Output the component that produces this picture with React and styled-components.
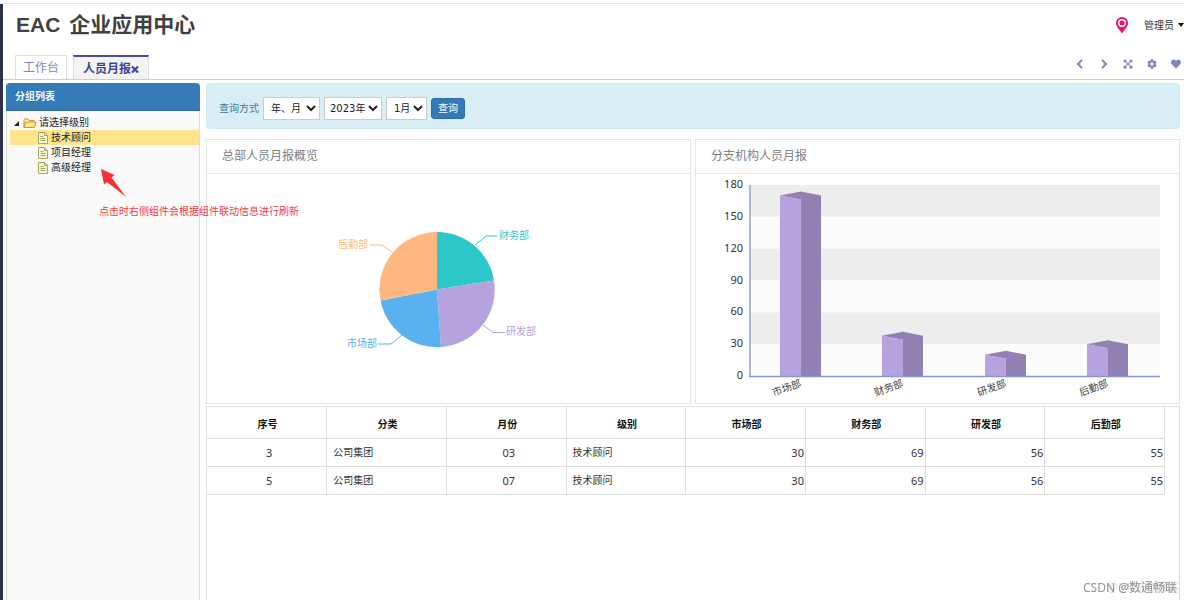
import React, { useState } from 'react';
import styled, { createGlobalStyle, css } from 'styled-components';
import { FaExpandArrowsAlt, FaCog, FaHeart } from 'react-icons/fa';

const GlobalStyle = createGlobalStyle`
  *, *::before, *::after { box-sizing: border-box; }
  body {
    margin: 0;
    background: #fff;
    color: #333;
    font: 10px/15px "DejaVu Sans", "Noto Sans CJK SC", sans-serif;
  }
  button, select { font: inherit; color: inherit; }
  button { cursor: pointer; }
`;

const chartFont = css`
  font-family: "Noto Sans", "Noto Sans CJK SC", sans-serif;
`;

const Page = styled.div`
  display: flex;
  flex-direction: column;
  min-height: 100vh;
  border-top: 2px solid #fff;
`;

const Shell = styled.div`
  flex: 1;
  display: flex;
  flex-direction: column;
  border-left: 3px solid #2b3148;
  box-shadow: 0 -1px 0 #e4e4e4;
  margin-top: 2px;
`;

const Header = styled.header`
  display: flex;
  justify-content: space-between;
  align-items: center;
  height: 42px;
  padding-left: 13px;
`;

const Title = styled.h1`
  display: flex;
  gap: 9px;
  margin: 0;
  color: #404040;
  font: bold 21px/28px "Liberation Sans", "Noto Sans CJK SC", sans-serif;
`;

const Account = styled.div`
  display: flex;
  align-items: center;
  gap: 16px;
`;

const UserButton = styled.button`
  display: flex;
  align-items: center;
  gap: 4px;
  padding: 0;
  border: 0;
  background: none;
  color: #333;
`;

const NavBar = styled.div`
  display: flex;
  justify-content: space-between;
  height: 34px;
  padding-left: 12px;
  border-bottom: 1px solid #ccc;
`;

const Tabs = styled.nav`
  display: flex;
  align-items: flex-end;
  gap: 6px;
`;

const Tab = styled.button`
  display: flex;
  align-items: center;
  height: 24px;
  padding: 2px 7px 0;
  border: 1px solid #ddd;
  border-bottom: 0;
  background: #fff;
  color: #8388b8;
  font-size: 12px;
  ${({ $active }) => $active && css`
    padding: 2px 9px 0;
    border-top: 2px solid #4a4f9c;
    background: #f3f3f3;
    color: #40469a;
    font-weight: 700;
  `}
`;

const Tools = styled.div`
  display: flex;
  align-items: center;
  gap: 12px;
  padding: 2px 2px 0 0;
`;

const Tool = styled.button`
  display: flex;
  justify-content: center;
  width: 12px;
  padding: 0;
  border: 0;
  background: none;
  color: #7d86bd;
`;

const Body = styled.div`
  flex: 1;
  display: grid;
  grid-template-columns: 194px 1fr;
  gap: 6px;
  padding: 3px 4px 0 3px;
`;

const Sidebar = styled.aside`
  position: relative;
  border: 1px solid #ddd;
  border-width: 0 1px;
  border-radius: 4px 4px 0 0;
  background: #f9f9f9;
`;

const SideTitle = styled.h2`
  margin: 0 -1px;
  padding: 0 9px;
  border-bottom: 1px solid #2b6599;
  border-radius: 4px 4px 0 0;
  background: #337ab7;
  color: #fff;
  font-size: 10px;
  line-height: 27px;
`;

const Tree = styled.ul`
  margin: 0;
  padding: 4px 0 0 3px;
  list-style: none;
`;

const TreeRow = styled.button`
  display: flex;
  align-items: center;
  gap: ${({ $leaf }) => ($leaf ? 3 : 2)}px;
  width: 100%;
  height: 15px;
  padding: 0 0 0 ${({ $leaf }) => ($leaf ? 28 : 3)}px;
  border: 0;
  background: ${({ $selected }) => ($selected ? '#ffe48d' : 'transparent')};
  color: #222;
`;

const Note = styled.div`
  position: absolute;
  z-index: 2;
  top: 86px;
  left: 92px;
  color: #f23a3f;
  white-space: nowrap;
`;

const NoteArrow = styled.svg`
  display: block;
  margin: 0 0 6px 2px;
`;

const Main = styled.main`
  display: flex;
  flex-direction: column;
  min-width: 0;
`;

const QueryBar = styled.form`
  display: flex;
  align-items: center;
  gap: 4px;
  height: 46px;
  margin-bottom: 10px;
  padding: 4px 12px 0;
  border: 1px solid #cde8f0;
  border-radius: 4px;
  background: #d9edf5;
  color: #3f7794;
`;

const Select = styled.select`
  width: ${({ $width }) => $width}px;
  height: 23px;
  padding: 0 0 0 ${({ $tight }) => ($tight ? 1 : 3)}px;
  border: 1px solid #ccc;
  border-radius: 0;
  background: #fff;
  color: #222;
`;

const QueryButton = styled.button`
  height: 21px;
  padding: 0 6px;
  border: 1px solid #2e6da4;
  border-radius: 3px;
  background: #337ab7;
  color: #fff;
`;

const Cards = styled.div`
  display: grid;
  grid-template-columns: 1fr 1fr;
  gap: 4px;
  margin-bottom: 2px;
`;

const Card = styled.section`
  border: 1px solid #e4e4e4;
`;

const CardTitle = styled.h3`
  margin: 0;
  padding: 0 15px;
  border-bottom: 1px solid #e9e9e9;
  color: #808080;
  font-size: 12px;
  font-weight: 400;
  line-height: 33px;
`;

const Chart = styled.svg`
  display: block;
  width: 100%;
  height: 229px;
  font-size: 10px;
  ${chartFont}
`;

const Report = styled.section`
  flex: 1;
  padding-right: 14px;
  border: 1px solid #ddd;
  border-bottom: 0;
`;

const Table = styled.table`
  width: 100%;
  border-collapse: collapse;
  table-layout: fixed;
  ${chartFont}
`;

const Cell = styled.td`
  height: 28px;
  padding: 0 1px 0 6px;
  border-right: 1px solid #ddd;
  border-bottom: 1px solid #ddd;
  color: #333;
  font-size: ${({ $numeric }) => ($numeric ? 11 : 10)}px;
  text-align: ${({ $align }) => $align || 'left'};
`;

const HeadCell = styled(Cell)`
  height: 31px;
  padding: 4px 2px 0 4px;
  color: #111;
  font-weight: 700;
`;

const Watermark = styled.div`
  position: fixed;
  right: ${({ $faint }) => ($faint ? 5 : 7)}px;
  bottom: 3px;
  color: ${({ $faint }) => ($faint ? '#ddd' : '#929292')};
  font-size: 12px;
  line-height: 18px;
  ${chartFont}
`;

const PinIcon = () => (
  <svg width="12" height="17" viewBox="0 0 12 17" aria-hidden="true">
    <path d="M6 0a6 6 0 0 0-6 6c0 4 4 7 6 10.500C8 13 12 10 12 6a6 6 0 0 0-6-6z" fill="#f0116c" />
    <circle cx="6" cy="6" r="4" fill="#fff" />
    <circle cx="6" cy="6" r="2.500" fill="#f0116c" />
  </svg>
);

const CaretIcon = () => (
  <svg width="6" height="4" viewBox="0 0 6 4" aria-hidden="true">
    <path d="M0 0h6L3 4z" fill="#111" />
  </svg>
);

const CloseIcon = () => (
  <svg width="8" height="8" viewBox="0 0 8 8" aria-hidden="true">
    <path d="M1 1.500l6 6M7 1.500l-6 6" stroke="currentColor" strokeWidth="2.200" />
  </svg>
);

const BackIcon = () => (
  <svg width="10" height="10" viewBox="0 0 10 10" aria-hidden="true">
    <path d="M7 1 3 5l4 4" fill="none" stroke="currentColor" strokeWidth="2" />
  </svg>
);

const ForwardIcon = () => (
  <svg width="10" height="10" viewBox="0 0 10 10" aria-hidden="true">
    <path d="M3 1l4 4-4 4" fill="none" stroke="currentColor" strokeWidth="2" />
  </svg>
);

const FolderIcon = () => (
  <svg width="14" height="12" viewBox="0 0 14 12" aria-hidden="true">
    <path d="M1 10.500V3q0-1 1-1h3l1 1.500h5V5" fill="#fff3b0" stroke="#c79a26" />
    <path d="M1 10.500 2.500 5H13l-1.500 5.500z" fill="#ffe58a" stroke="#c79a26" strokeLinejoin="round" />
  </svg>
);

const FileIcon = () => (
  <svg width="10" height="12" viewBox="0 0 10 12" aria-hidden="true">
    <path d="M.5.5h6l3 3v8h-9z" fill="#fbf9cf" stroke="#aca45c" />
    <path d="M6.500.5v3h3" fill="none" stroke="#aca45c" />
    <path d="M2.500 4.500h3M2.500 6.500h5M2.500 8.500h5" stroke="#9aa566" />
  </svg>
);

const ExpandedIcon = () => (
  <svg width="8" height="8" viewBox="0 0 8 8" aria-hidden="true">
    <path d="M6 2v5H1z" fill="#222" />
  </svg>
);

const slices = [
  { name: '财务部', color: '#2ec7c9', path: 'M230 115.500V58A57.500 57.500 0 0 1 287 106.500z', line: '268,71 279,62 290,62', x: 292, y: 65 },
  { name: '研发部', color: '#b6a2de', path: 'M230 115.500 287 106.500A57.500 57.500 0 0 1 234 173z', line: '276,151 286,158.500 298,158.500', x: 299, y: 161 },
  { name: '市场部', color: '#5ab1ef', path: 'M230 115.500 234 173A57.500 57.500 0 0 1 173.500 126.500z', line: '195,161 184,170 171,170', x: 170, y: 173, end: true },
  { name: '后勤部', color: '#ffb980', path: 'M230 115.500 173.500 126.500A57.500 57.500 0 0 1 230 58z', line: '185,78 175,71 163,71', x: 161, y: 74, end: true },
];

const PieChart = () => (
  <Chart viewBox="0 0 483 229" role="img" aria-label="总部人员月报概览">
    {slices.map((s) => (
      <g key={s.name} fill={s.color}>
        <path d={s.path} />
        <polyline points={s.line} fill="none" stroke={s.color} />
        <text x={s.x} y={s.y} textAnchor={s.end ? 'end' : 'start'}>{s.name}</text>
      </g>
    ))}
  </Chart>
);

const ticks = [180, 150, 120, 90, 60, 30, 0];
const bars = [
  { name: '市场部', value: 170 },
  { name: '财务部', value: 38 },
  { name: '研发部', value: 20 },
  { name: '后勤部', value: 30 },
];
const plot = { left: 54, right: 464, top: 11, bottom: 202 };
const yOf = (v) => plot.bottom - ((plot.bottom - plot.top) * v) / 180;

const BarChart = () => (
  <Chart viewBox="0 0 483 229" role="img" aria-label="分支机构人员月报">
    {ticks.slice(0, -1).map((t, i) => (
      <rect key={t} x={plot.left} y={yOf(t)} width={plot.right - plot.left} height={yOf(0) - yOf(30)} fill={i % 2 ? '#fcfcfc' : '#ededed'} />
    ))}
    {ticks.map((t) => (
      <text key={t} x="47" y={yOf(t) + 3} textAnchor="end" fontSize="11" fill="#333">{t}</text>
    ))}
    {bars.map((b, i) => {
      const mid = Math.floor(plot.left + (102.5 * (2 * i + 1)) / 2);
      const y = yOf(b.value);
      return (
        <g key={b.name}>
          <path d={`M${mid - 21} ${y}L${mid} ${y - 4}l20 4V${plot.bottom}H${mid}V${y + 4}z`} fill="#9180b1" />
          <path d={`M${mid - 21} ${y}l21 4V${plot.bottom}h-21z`} fill="#b6a2de" />
          <text transform={`translate(${mid + 1} ${plot.bottom + 10}) rotate(-20)`} textAnchor="end" fill="#444">{b.name}</text>
        </g>
      );
    })}
    <path d={`M${plot.left} ${plot.top}V${plot.bottom}`} stroke="#94a2c4" strokeWidth="1.500" />
    <path d={`M${plot.left - 1} ${plot.bottom + 0.5}H${plot.right}`} stroke="#8794dc" strokeWidth="1.500" />
  </Chart>
);

const tools = [
  ['后退', BackIcon],
  ['前进', ForwardIcon],
  ['全屏', FaExpandArrowsAlt],
  ['设置', FaCog],
  ['收藏', FaHeart],
];
const levels = ['技术顾问', '项目经理', '高级经理'];
const columns = ['序号', '分类', '月份', '级别', '市场部', '财务部', '研发部', '后勤部'];
const aligns = ['center', 'left', 'center', 'left', 'right', 'right', 'right', 'right'];
const rows = [
  ['3', '公司集团', '03', '技术顾问', '30', '69', '56', '55'],
  ['5', '公司集团', '07', '技术顾问', '30', '69', '56', '55'],
];

export default function App() {
  const [level, setLevel] = useState(levels[0]);
  return (
    <Page>
      <GlobalStyle />
      <Shell>
        <Header>
          <Title><span>EAC</span> <span>企业应用中心</span></Title>
          <Account>
            <PinIcon />
            <UserButton type="button">管理员<CaretIcon /></UserButton>
          </Account>
        </Header>
        <NavBar>
          <Tabs>
            <Tab type="button">工作台</Tab>
            <Tab type="button" $active>人员月报<CloseIcon /></Tab>
          </Tabs>
          <Tools>
            {tools.map(([label, Icon]) => (
              <Tool key={label} type="button" aria-label={label}><Icon size={10} /></Tool>
            ))}
          </Tools>
        </NavBar>
        <Body>
          <Sidebar>
            <SideTitle>分组列表</SideTitle>
            <Tree>
              <li><TreeRow type="button"><ExpandedIcon /><FolderIcon />请选择级别</TreeRow></li>
              {levels.map((name) => (
                <li key={name}>
                  <TreeRow type="button" $leaf $selected={name === level} onClick={() => setLevel(name)}>
                    <FileIcon />{name}
                  </TreeRow>
                </li>
              ))}
            </Tree>
            <Note>
              <NoteArrow width="26" height="29" viewBox="0 0 26 29" aria-hidden="true">
                <path d="M0 0 13.500 6l-3 2.500L25 28 6 13l-3 2.500z" fill="#f8312f" />
              </NoteArrow>
              点击时右侧组件会根据组件联动信息进行刷新
            </Note>
          </Sidebar>
          <Main>
            <QueryBar onSubmit={(e) => e.preventDefault()}>
              <label htmlFor="mode">查询方式</label>
              <Select id="mode" $width={57}><option>年、月</option></Select>
              <Select aria-label="年" $width={58} $tight><option>2023年</option></Select>
              <Select aria-label="月" $width={41}><option>1月</option></Select>
              <QueryButton type="submit">查询</QueryButton>
            </QueryBar>
            <Cards>
              <Card><CardTitle>总部人员月报概览</CardTitle><PieChart /></Card>
              <Card><CardTitle>分支机构人员月报</CardTitle><BarChart /></Card>
            </Cards>
            <Report>
              <Table>
                <thead>
                  <tr>{columns.map((c) => <HeadCell as="th" key={c} $align="center">{c}</HeadCell>)}</tr>
                </thead>
                <tbody>
                  {rows.map((row) => (
                    <tr key={row[0]}>
                      {row.map((value, i) => (
                        <Cell key={columns[i]} $align={aligns[i]} $numeric={/^\d+$/.test(value)}>{value}</Cell>
                      ))}
                    </tr>
                  ))}
                </tbody>
              </Table>
            </Report>
          </Main>
        </Body>
      </Shell>
      <Watermark $faint>@51CTO博客</Watermark>
      <Watermark>CSDN @数通畅联</Watermark>
    </Page>
  );
}
